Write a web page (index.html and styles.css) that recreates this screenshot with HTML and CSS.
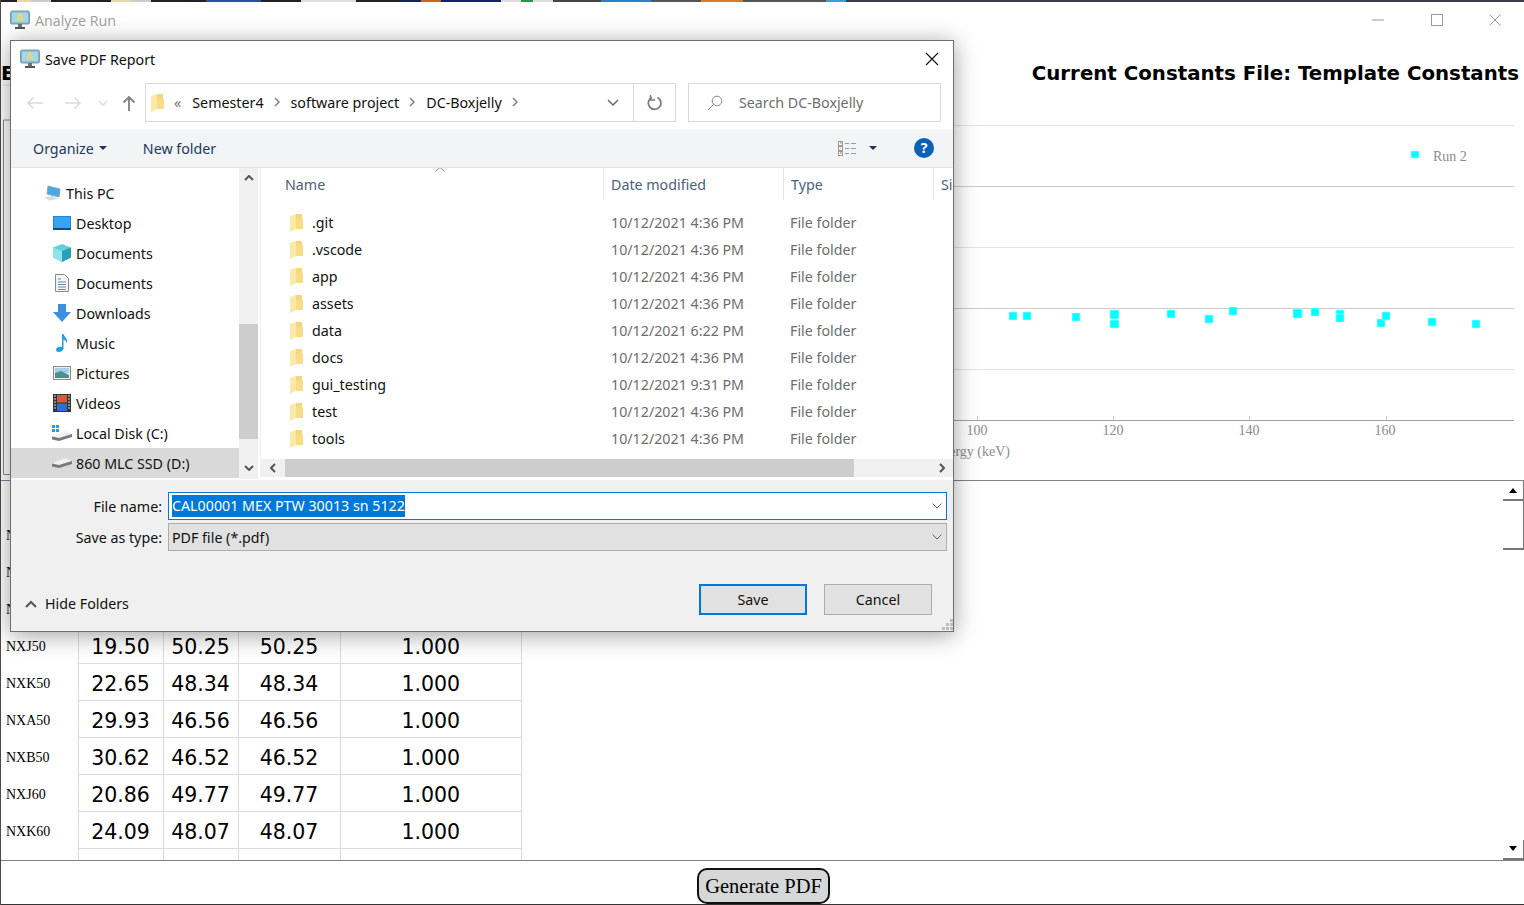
FILE: index.html
```html
<!DOCTYPE html>
<html lang="en">
<head>
<meta charset="utf-8">
<title>Analyze Run</title>
<link rel="stylesheet" href="styles.css">
</head>
<body>
<svg class="defs" width="0" height="0" aria-hidden="true">
  <symbol id="appicon" viewBox="0 0 20 20">
    <rect x="0.5" y="1" width="19" height="13" rx="1.5" fill="#6fb4d0" stroke="#8b9aa3"/>
    <rect x="2" y="2.5" width="16" height="10" fill="#a9d6e6"/>
    <path d="M6.5 11 9.2 3h1.6l2.7 8h-1.7l-.5-1.7H8.7L8.2 11zM9.1 8h1.8L10 5z" fill="#f0dc6a"/>
    <rect x="8" y="14" width="4" height="3" fill="#6b747a"/>
    <rect x="5" y="17" width="10" height="2" fill="#4e565b"/>
  </symbol>
  <symbol id="folder" viewBox="0 0 13 18">
    <path d="M0 2 6 0h6v15H6L0 18z" fill="#fbe9a9"/>
    <path d="M6 0h6v15H6z" fill="#f5d67e"/>
    <path d="M6 4.500h7V15H6z" fill="#f8dc86"/>
  </symbol>
  <symbol id="drive" viewBox="0 0 20 10">
    <path d="M0 5.500 13 0l7 3v2.500L7 9 0 7.500z" fill="#f0f0f0"/>
    <path d="M0 5.500 7 7 20 3v3L7 10 0 8.500z" fill="#777b7e"/>
  </symbol>
</svg>

<div class="window">
  <div class="strip"></div>
  <header class="titlebar">
    <div class="titlebar-left">
      <svg class="app-icon" width="20" height="20"><use href="#appicon"/></svg>
      <span>Analyze Run</span>
    </div>
    <div class="wincontrols">
      <svg width="14" height="14" viewBox="0 0 14 14"><path d="M1 7h12" stroke="#999"/></svg>
      <svg width="14" height="14" viewBox="0 0 14 14"><rect x="1.5" y="1.5" width="11" height="11" fill="none" stroke="#999"/></svg>
      <svg width="14" height="14" viewBox="0 0 14 14"><path d="M1.5 1.5l11 11M12.5 1.5l-11 11" stroke="#999"/></svg>
    </div>
  </header>

  <div class="headings">
    <span>E</span>
    <span>Current Constants File: Template Constants</span>
  </div>

  <svg class="chart" width="1523" height="396" viewBox="1 84 1523 396">
    <path d="M3 85H10" stroke="#e3e3e3" fill="none"/>
    <path d="M3.5 120V474.5H12M3.5 120H12" stroke="#8a8a8a" fill="none"/>
    <path d="M12 125.5H1514M12 247.5H1514M12 369.5H1514" stroke="#e4e4e4"/>
    <path d="M12 186.5H1514M12 308.5H1514" stroke="#cccccc"/>
    <path d="M12 420.5H1514" stroke="#a0a0a0"/>
    <path d="M977.5 416V420M1113.5 416V420M1249.5 416V420M1386.5 416V420" stroke="#c8c8c8"/>
    <g class="chart-text">
      <text x="977" y="435" text-anchor="middle">100</text>
      <text x="1113" y="435" text-anchor="middle">120</text>
      <text x="1249" y="435" text-anchor="middle">140</text>
      <text x="1385" y="435" text-anchor="middle">160</text>
      <text x="1010" y="456" text-anchor="end">Energy (keV)</text>
      <text x="1433" y="161">Run 2</text>
    </g>
    <g class="points">
      <rect x="1411" y="151" width="8" height="7"/>
      <rect x="1009" y="312" width="8" height="8"/>
      <rect x="1023" y="312" width="8" height="8"/>
      <rect x="1072" y="313" width="8" height="8"/>
      <rect x="1110" y="310" width="9" height="9"/>
      <rect x="1110" y="320" width="9" height="8"/>
      <rect x="1167" y="310" width="8" height="8"/>
      <rect x="1205" y="315" width="8" height="8"/>
      <rect x="1229" y="307" width="8" height="8"/>
      <rect x="1293" y="309" width="9" height="9"/>
      <rect x="1311" y="308" width="8" height="8"/>
      <rect x="1336" y="310" width="8" height="8"/>
      <rect x="1336" y="314" width="8" height="8"/>
      <rect x="1377" y="319" width="8" height="8"/>
      <rect x="1382" y="312" width="8" height="8"/>
      <rect x="1428" y="318" width="8" height="8"/>
      <rect x="1472" y="320" width="8" height="8"/>
    </g>
  </svg>

  <section class="panel">
    <div class="table-wrap">
      <table class="results">
        <tbody>
          <tr class="head-row"><td></td><td></td><td></td><td></td><td></td></tr>
          <tr><th>N</th><td></td><td></td><td></td><td></td></tr>
          <tr><th>N</th><td></td><td></td><td></td><td></td></tr>
          <tr><th>N</th><td></td><td></td><td></td><td></td></tr>
          <tr><th>NXJ50</th><td>19.50</td><td>50.25</td><td>50.25</td><td>1.000</td></tr>
          <tr><th>NXK50</th><td>22.65</td><td>48.34</td><td>48.34</td><td>1.000</td></tr>
          <tr><th>NXA50</th><td>29.93</td><td>46.56</td><td>46.56</td><td>1.000</td></tr>
          <tr><th>NXB50</th><td>30.62</td><td>46.52</td><td>46.52</td><td>1.000</td></tr>
          <tr><th>NXJ60</th><td>20.86</td><td>49.77</td><td>49.77</td><td>1.000</td></tr>
          <tr><th>NXK60</th><td>24.09</td><td>48.07</td><td>48.07</td><td>1.000</td></tr>
          <tr><th></th><td></td><td></td><td></td><td></td></tr>
        </tbody>
      </table>
    </div>
    <div class="vscroll">
      <div class="vbtn vbtn-up"><span class="tri-up"></span></div>
      <div class="vthumb"></div>
      <div class="vspace"></div>
      <div class="vbtn vbtn-down"><span class="tri-down"></span></div>
    </div>
  </section>

  <footer class="actions">
    <button class="generate" type="button">Generate PDF</button>
  </footer>
</div>

<div class="dialog">
  <div class="dlg-title">
    <svg width="20" height="20"><use href="#appicon"/></svg>
    <span class="dlg-title-text">Save PDF Report</span>
    <svg class="dlg-close" width="14" height="14" viewBox="0 0 14 14"><path d="M1 1l12 12M13 1 1 13" stroke="#111" stroke-width="1.1"/></svg>
  </div>

  <div class="navrow">
    <div class="navbtns">
      <svg width="18" height="14" viewBox="0 0 18 14"><path d="M17 7H2M7.5 1.5 2 7l5.500 5.500" stroke="#dcdcdc" stroke-width="1.6" fill="none"/></svg>
      <svg width="18" height="14" viewBox="0 0 18 14"><path d="M1 7h15M10.500 1.500 16 7l-5.500 5.500" stroke="#dcdcdc" stroke-width="1.6" fill="none"/></svg>
      <svg width="10" height="6" viewBox="0 0 10 6"><path d="M1 1l4 4 4-4" stroke="#dcdcdc" stroke-width="1.500" fill="none"/></svg>
      <svg width="14" height="16" viewBox="0 0 14 16"><path d="M7 16V2M1.500 7.500 7 2l5.500 5.500" stroke="#7f7f7f" stroke-width="1.800" fill="none"/></svg>
    </div>
    <div class="address">
      <svg class="addr-folder" width="13" height="18"><use href="#folder"/></svg>
      <span class="crumb-more">«</span>
      <span class="crumb">Semester4</span><svg class="sep" width="6" height="10" viewBox="0 0 6 10"><path d="M1 1l4 4-4 4" stroke="#808080" stroke-width="1.500" fill="none"/></svg>
      <span class="crumb">software project</span><svg class="sep" width="6" height="10" viewBox="0 0 6 10"><path d="M1 1l4 4-4 4" stroke="#808080" stroke-width="1.500" fill="none"/></svg>
      <span class="crumb">DC-Boxjelly</span><svg class="sep" width="6" height="10" viewBox="0 0 6 10"><path d="M1 1l4 4-4 4" stroke="#808080" stroke-width="1.500" fill="none"/></svg>
      <svg class="addr-chev" width="12" height="7" viewBox="0 0 12 7"><path d="M1 1l5 5 5-5" stroke="#6d6d6d" stroke-width="1.500" fill="none"/></svg>
      <div class="addr-refresh">
        <svg width="16" height="16" viewBox="0 0 16 16"><path d="M10.500 2.400A6.300 6.300 0 1 1 5 2.300" stroke="#7a7a7a" stroke-width="1.700" fill="none"/><path d="M3.500 0v5h4.500" stroke="#7a7a7a" stroke-width="1.400" fill="none"/></svg>
      </div>
    </div>
    <div class="search">
      <svg width="16" height="16" viewBox="0 0 16 16"><circle cx="10" cy="6" r="4.800" stroke="#8a8a8a" fill="none"/><path d="M6.500 9.500 1 15" stroke="#8a8a8a"/></svg>
      <span>Search DC-Boxjelly</span>
    </div>
  </div>

  <div class="toolbar">
    <span class="tool">Organize<span class="caret"></span></span>
    <span class="tool tool-new">New folder</span>
    <span class="tool-spacer"></span>
    <svg class="viewicon" width="18" height="15" viewBox="0 0 18 15">
      <rect x="0.500" y="0.500" width="4" height="4" fill="#fff" stroke="#9a9a9a"/><rect x="0.500" y="5.500" width="4" height="4" fill="#fff" stroke="#9a9a9a"/><rect x="0.500" y="10.500" width="4" height="4" fill="#fff" stroke="#9a9a9a"/>
      <path d="M2 2h1.500" stroke="#3a7bbf"/><path d="M2 7h1.500" stroke="#e0b030"/><path d="M2 12h1.500" stroke="#c0392b"/>
      <path d="M7 2.500h4M13 2.500h5M7 7.500h4M13 7.500h5M7 12.500h4M13 12.500h5" stroke="#9a9a9a"/>
    </svg>
    <span class="caret caret-view"></span>
    <span class="help">?</span>
  </div>

  <div class="browser">
    <nav class="tree">
      <ul class="tree-list">
        <li class="tree-top">
          <svg width="18" height="16" viewBox="0 0 18 16"><path d="M5 1l12 3-1 8-12-3z" fill="#4ba6ea" stroke="#8aa"/><path d="M1 12l9-1 5 3-9 1.500z" fill="#d9dcde"/></svg>
          This PC
        </li>
        <li><svg width="18" height="14" viewBox="0 0 18 14"><rect width="18" height="14" fill="#1f88e0"/><rect x="1" y="1" width="16" height="11" fill="#35a5f2"/><rect y="12" width="18" height="2" fill="#0b4f8a"/></svg>Desktop</li>
        <li><svg width="18" height="18" viewBox="0 0 18 18"><path d="M9 0l9 3.500v10L9 18 0 13.500v-10z" fill="#5fd0dd"/><path d="M9 7l9-3.500v10L9 18z" fill="#2aa0b8"/><path d="M0 3.500 9 7v11L0 13.500z" fill="#8fe3ea"/></svg>Documents</li>
        <li><svg width="14" height="18" viewBox="0 0 14 18"><path d="M.5.500h9l4 4v13H.5z" fill="#f4f4f4" stroke="#8b8b8b"/><path d="M3 5h3M3 8h8M3 10.500h8M3 13h8M3 15.500h8" stroke="#6f8fa8"/></svg>Documents</li>
        <li><svg width="18" height="18" viewBox="0 0 18 18"><path d="M5 0h8v8h5l-9 10L0 8h5z" fill="#3d8fe0"/></svg>Downloads</li>
        <li><svg width="14" height="18" viewBox="0 0 14 18"><path d="M7 0h1.500c.5 3 4.500 4 3.500 9-.7-2-2-3-3.500-3.500V14c0 2.500-2.500 4-5 4C1.500 18 1 16.500 1 15.500 1 13.500 4.500 12 7 13z" fill="#1e9fe8"/></svg>Music</li>
        <li><svg width="18" height="14" viewBox="0 0 18 14"><rect x="0.500" y="0.500" width="17" height="13" fill="#eee" stroke="#8b8b8b"/><rect x="2" y="2" width="14" height="5" fill="#a8cfe8"/><path d="M2 12V7l6-2 8 4v3z" fill="#4f8f8f"/></svg>Pictures</li>
        <li><svg width="18" height="18" viewBox="0 0 18 18"><rect width="18" height="18" fill="#333"/><rect x="4" y="1" width="10" height="7.500" fill="#d85a30"/><rect x="4" y="9.500" width="10" height="7.500" fill="#2e6fd0"/><path d="M1 2h2M1 5h2M1 8h2M1 11h2M1 14h2M15 2h2M15 5h2M15 8h2M15 11h2M15 14h2" stroke="#ddd"/></svg>Videos</li>
        <li><svg width="20" height="16" viewBox="0 0 20 16"><path d="M0 0h3v3H0zM4 0h3v3H4zM0 4h3v3H0zM4 4h3v3H4z" fill="#10a5ee"/><use href="#drive" y="6" width="20" height="10"/></svg>Local Disk (C:)</li>
        <li class="tree-sel"><svg width="20" height="10"><use href="#drive"/></svg>860 MLC SSD (D:)</li>
      </ul>
    </nav>
    <div class="tree-scroll">
      <svg width="10" height="6" viewBox="0 0 10 6"><path d="M1 5l4-4 4 4" stroke="#555" stroke-width="2" fill="none"/></svg>
      <div class="tree-thumb"></div>
      <svg width="10" height="6" viewBox="0 0 10 6"><path d="M1 1l4 4 4-4" stroke="#555" stroke-width="2" fill="none"/></svg>
    </div>
    <div class="files">
      <div class="file-head">
        <span class="col-name">Name<svg class="sort" width="10" height="5" viewBox="0 0 10 5"><path d="M.5 4.500 5 .5l4.500 4" stroke="#888" fill="none"/></svg></span>
        <span class="col-date">Date modified</span>
        <span class="col-type">Type</span>
        <span class="col-size">Size</span>
      </div>
      <ul class="file-list">
        <li><span class="col-name"><svg width="13" height="18"><use href="#folder"/></svg>.git</span><span class="col-date">10/12/2021 4:36 PM</span><span class="col-type">File folder</span></li>
        <li><span class="col-name"><svg width="13" height="18"><use href="#folder"/></svg>.vscode</span><span class="col-date">10/12/2021 4:36 PM</span><span class="col-type">File folder</span></li>
        <li><span class="col-name"><svg width="13" height="18"><use href="#folder"/></svg>app</span><span class="col-date">10/12/2021 4:36 PM</span><span class="col-type">File folder</span></li>
        <li><span class="col-name"><svg width="13" height="18"><use href="#folder"/></svg>assets</span><span class="col-date">10/12/2021 4:36 PM</span><span class="col-type">File folder</span></li>
        <li><span class="col-name"><svg width="13" height="18"><use href="#folder"/></svg>data</span><span class="col-date">10/12/2021 6:22 PM</span><span class="col-type">File folder</span></li>
        <li><span class="col-name"><svg width="13" height="18"><use href="#folder"/></svg>docs</span><span class="col-date">10/12/2021 4:36 PM</span><span class="col-type">File folder</span></li>
        <li><span class="col-name"><svg width="13" height="18"><use href="#folder"/></svg>gui_testing</span><span class="col-date">10/12/2021 9:31 PM</span><span class="col-type">File folder</span></li>
        <li><span class="col-name"><svg width="13" height="18"><use href="#folder"/></svg>test</span><span class="col-date">10/12/2021 4:36 PM</span><span class="col-type">File folder</span></li>
        <li><span class="col-name"><svg width="13" height="18"><use href="#folder"/></svg>tools</span><span class="col-date">10/12/2021 4:36 PM</span><span class="col-type">File folder</span></li>
      </ul>
      <div class="hscroll">
        <div class="hbtn"><svg width="6" height="10" viewBox="0 0 6 10"><path d="M5 1 1 5l4 4" stroke="#555" stroke-width="2" fill="none"/></svg></div>
        <div class="hthumb"></div>
        <div class="hbtn hbtn-right"><svg width="6" height="10" viewBox="0 0 6 10"><path d="M1 1l4 4-4 4" stroke="#555" stroke-width="2" fill="none"/></svg></div>
      </div>
    </div>
  </div>

  <div class="dlg-bottom">
    <div class="form">
      <label class="form-label">File name:</label>
      <div class="field field-active"><span class="selected">CAL00001 MEX PTW 30013 sn 5122</span><svg width="10" height="6" viewBox="0 0 10 6"><path d="M.5.500 5 5l4.500-4.500" stroke="#666" fill="none"/></svg></div>
      <label class="form-label">Save as type:</label>
      <div class="field field-select"><span>PDF file (*.pdf)</span><svg width="10" height="6" viewBox="0 0 10 6"><path d="M.5.500 5 5l4.500-4.500" stroke="#666" fill="none"/></svg></div>
    </div>
    <div class="dlg-actions">
      <span class="hide-folders"><svg width="12" height="8" viewBox="0 0 12 8"><path d="M1 7l5-5 5 5" stroke="#555" stroke-width="2" fill="none"/></svg>Hide Folders</span>
      <button class="btn btn-default" type="button">Save</button>
      <button class="btn" type="button">Cancel</button>
    </div>
    <svg class="grip" width="11" height="11" viewBox="0 0 11 11"><path d="M8 0h3v3H8zM4 4h3v3H4zM8 4h3v3H8zM0 8h3v3H0zM4 8h3v3H4zM8 8h3v3H8z" fill="#bdbdbd"/></svg>
  </div>
</div>
</body>
</html>
```

FILE: styles.css
```css
* { box-sizing: border-box; }
html, body { margin: 0; padding: 0; width: 1524px; height: 905px; overflow: hidden; background: #fff; }
.defs { position: absolute; }

/* background window */
.window { display: flex; flex-direction: column; height: 905px; border-left: 1px solid #4a4a4a; font-family: "Liberation Serif", serif; color: #000; }
.strip { height: 2px; flex: none; background: linear-gradient(90deg, #222 0 16px, #e6d6a8 16px 30px, #ccc 30px 50px, #222 50px 110px, #e6d6a8 110px 130px, #ccc 130px 150px, #222 150px 205px, #2a4f9f 205px 260px, #222 260px 300px, #ddd 300px 355px, #222 355px 400px, #12246b 400px 420px, #d8601a 420px 440px, #12246b 440px 500px, #ddd 500px 520px, #1a9b50 520px 532px, #ddd 532px 552px, #444 552px 600px, #2a7fd0 600px 650px, #555 650px 700px, #e07a1f 700px 742px, #555 742px 825px, #38a0d8 825px 845px, #3a3a48 845px 100%); }
.titlebar { height: 38px; flex: none; display: flex; justify-content: space-between; align-items: center; padding: 0 22px 2px 9px; }
.titlebar-left { display: flex; align-items: center; gap: 5px; font: 14.250px "Open Sans", sans-serif; color: #a0a0a0; }
.wincontrols { display: flex; gap: 44.500px; }
.headings { height: 44px; flex: none; display: flex; justify-content: space-between; padding: 21px 5px 0 0; font: bold 19.800px/26px "DejaVu Sans", sans-serif; }
.chart { display: block; flex: none; }
.chart-text { font: 14px "Liberation Serif", serif; fill: #8c8c8c; }
.points rect { fill: #00ffff; stroke: #b8ffff; stroke-width: .6; }

.panel { height: 381px; flex: none; display: flex; border-top: 1px solid #7d828a; border-bottom: 1px solid #7d828a; }
.table-wrap { flex: 1; overflow: hidden; }
.results { border-collapse: collapse; table-layout: fixed; width: 521px; }
.results th { width: 77px; padding: 4px 0 0 5px; text-align: left; font: 14px "Liberation Serif", serif; }
.results td { height: 37px; border-left: 1px solid #dcdcdc; border-right: 1px solid #dcdcdc; border-bottom: 1px solid #dcdcdc; padding: 5px 0 0; text-align: center; font: 20.500px "DejaVu Sans", sans-serif; color: #000; }
.results td:nth-child(2) { width: 85px; }
.results td:nth-child(3) { width: 75px; }
.results td:nth-child(4) { width: 102px; }
.results .head-row td { height: 34px; }
.results .head-row td:first-child { border: 0; width: 77px; }

.vscroll { width: 21px; flex: none; display: flex; flex-direction: column; }
.vbtn { height: 20px; flex: none; display: flex; align-items: center; justify-content: center; border-right: 1px solid #777; border-bottom: 2px solid #777; }
.vthumb { height: 49px; flex: none; border-right: 1px solid #777; border-bottom: 2px solid #777; }
.vspace { flex: 1; }
.tri-up { border: 4px solid transparent; border-top: 0; border-bottom: 5px solid #000; width: 0; height: 0; }
.tri-down { border: 4px solid transparent; border-bottom: 0; border-top: 5px solid #000; width: 0; height: 0; margin-top: -2px; }

.actions { flex: 1; display: flex; justify-content: center; align-items: flex-end; border-bottom: 1px solid #333; padding-left: 2px; }
.generate { width: 133px; height: 36px; background: #d6d8d8; border: 2px solid #111; border-radius: 10px; font: 20.500px "Liberation Serif", serif; color: #000; padding: 0; }

/* save dialog over the window */
.dialog { position: absolute; left: 10px; top: 40px; width: 944px; height: 592px; background: #fff; border: 1px solid #6e6e6e; box-shadow: 0 3px 22px rgba(0,0,0,.38); display: flex; flex-direction: column; font: 14.250px "Noto Sans", sans-serif; color: #111; overflow: hidden; }
.dlg-title { height: 38px; flex: none; display: flex; align-items: center; padding: 0 14px 2px 9px; gap: 5px; }
.dlg-title-text { flex: 1; }
.navrow { height: 50px; flex: none; display: flex; align-items: flex-start; padding: 4px 12px 0 15px; }
.navbtns { width: 119px; height: 39px; flex: none; display: flex; align-items: center; gap: 20px; }
.navbtns svg:nth-child(3) { margin-left: -4px; }
.navbtns svg:nth-child(4) { margin-left: -6px; }
.address { width: 531px; height: 39px; flex: none; border: 1px solid #d9d9d9; display: flex; align-items: center; padding-left: 5px; }
.addr-folder { margin-right: 10px; }
.crumb-more { color: #777; margin-right: 11px; }
.sep { margin: -2px 11px 0 10px; flex: none; }
.addr-chev { margin-left: auto; margin-right: 14px; }
.addr-refresh { width: 42px; height: 37px; flex: none; border-left: 1px solid #d9d9d9; display: flex; align-items: center; justify-content: center; }
.search { width: 253px; height: 39px; flex: none; margin-left: 12px; border: 1px solid #d9d9d9; display: flex; align-items: center; gap: 16px; padding-left: 18px; color: #6d6d6d; }
.toolbar { height: 39px; flex: none; display: flex; align-items: center; background: #f3f4f6; border-bottom: 1px solid #e5e5e5; padding: 0 19px 0 22px; color: #1e395b; }
.tool { display: inline-flex; align-items: center; }
.tool-new { margin-left: 36px; }
.tool-spacer { flex: 1; }
.caret { display: inline-block; width: 0; height: 0; border: 4px solid transparent; border-bottom: 0; border-top: 4px solid #1e395b; margin-left: 5px; }
.caret-view { margin: 0 37px 0 13px; }
.help { width: 20px; height: 20px; border-radius: 50%; background: #0a62b8; color: #fff; font: bold 14px/20px "Noto Sans", sans-serif; text-align: center; }

.browser { height: 311px; flex: none; display: flex; }
.tree { width: 228px; flex: none; overflow: hidden; }
.tree-list { list-style: none; margin: 0; padding: 10px 0 0; }
.tree-list li { height: 30px; display: flex; align-items: center; padding-left: 41px; }
.tree-list li svg { margin-right: 4px; width: 20px; flex: none; }
.tree-list li.tree-top { padding-left: 31px; }
.tree-list li.tree-sel { background: #d9d9d9; }
.tree-scroll { width: 19px; flex: none; background: #f0f0f0; display: flex; flex-direction: column; align-items: center; padding-top: 7px; }
.tree-thumb { width: 19px; height: 115px; background: #cdcdcd; margin: 143px 0 26px; }
.files { flex: 1; min-width: 0; margin-left: 2px; border-left: 1px solid #f0f0f0; display: flex; flex-direction: column; overflow: hidden; }
.file-head { height: 32px; flex: none; display: flex; align-items: center; color: #4c607a; }
.file-list { list-style: none; margin: 9px 0 0; padding: 0; height: 250px; }
.file-list li { height: 27px; display: flex; align-items: center; color: #6d6d6d; }
.col-name { width: 342px; flex: none; padding-left: 24px; display: flex; align-items: center; color: #111; position: relative; }
.file-head .col-name { color: #4c607a; }
.file-list .col-name svg { margin: 0 9px 0 5px; }
.sort { position: absolute; left: 174px; top: -8px; }
.col-date { width: 180px; flex: none; padding-left: 8px; }
.col-type { width: 150px; flex: none; padding-left: 7px; }
.col-size { flex: none; padding-left: 7px; }
.file-head .col-date, .file-head .col-type, .file-head .col-size { border-left: 1px solid #e5e5e5; height: 32px; line-height: 34px; }
.file-head .col-date { padding-left: 7px; }
.hscroll { height: 18px; flex: none; background: #f0f0f0; display: flex; }
.hbtn { width: 24px; flex: none; display: flex; align-items: center; justify-content: center; }
.hbtn-right { margin-left: auto; width: 22px; }
.hthumb { width: 569px; background: #cdcdcd; }

.dlg-bottom { flex: 1; background: #f0f0f0; border-top: 1px solid #fff; position: relative; display: flex; flex-direction: column; padding: 12px 6px 0 0; }
.form { display: grid; grid-template-columns: 151px 1fr; column-gap: 6px; row-gap: 3px; align-items: center; }
.form-label { text-align: right; }
.field { height: 28px; display: flex; align-items: center; justify-content: space-between; padding: 0 4px 0 3px; }
.field-active { background: #fff; border: 1px solid #0078d7; }
.field-select { background: #e1e1e1; border: 1px solid #adadad; }
.selected { background: #0078d7; color: #fff; line-height: 22px; }
.dlg-actions { display: flex; align-items: center; margin-top: 33px; padding: 0 15px 0 14px; gap: 17px; }
.hide-folders { display: flex; align-items: center; gap: 8px; margin-right: auto; padding-top: 8px; }
.btn { width: 108px; height: 31px; background: #e1e1e1; border: 1px solid #adadad; font: 14.250px "Noto Sans", sans-serif; color: #111; padding: 0; }
.btn-default { border: 2px solid #0078d7; }
.grip { position: absolute; right: 0; bottom: 1px; }
```
